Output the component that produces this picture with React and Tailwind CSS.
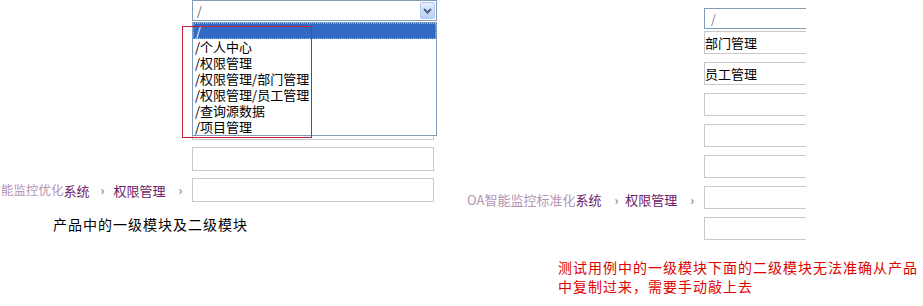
import React from 'react';

const FONT = { fontFamily: '"Noto Sans CJK SC", "Noto Sans", sans-serif' };

const options = ['/', '/个人中心', '/权限管理', '/权限管理/部门管理', '/权限管理/员工管理', '/查询源数据', '/项目管理'];

const Chevron = ({ className }) => (
    <span className={`text-[12px] font-bold leading-none text-[#8a8a8a] ${className}`}>›</span>
);

const LeftBox = () => <div className="h-[24px] w-[242px] border border-[#c9c9c9] bg-white" />;

const RightBox = ({ children }) => (
    <div className="flex h-[23px] w-[102px] items-center border-y border-l border-[#c9c9c9] bg-white text-[13px] leading-none text-black">
        {children}
    </div>
);

const LeftPanel = () => (
    <div className="relative h-full w-[460px] shrink-0">
        <div className="pl-[192px]">
            <div className="flex h-[21px] w-[245px] items-center border border-[#7f9db9] bg-white pl-[4px] pr-[1px]">
                <span className="text-[12px] leading-none text-[#555]">/</span>
                <div className="ml-auto flex h-[17px] w-[15px] items-center justify-center rounded-[2px] border border-[#b3c7ee] bg-gradient-to-b from-[#e6eefd] to-[#b9cdf6]">
                    <svg width="9" height="6" viewBox="0 0 9 6">
                        <path d="M1 1 L4.5 4.5 L8 1" fill="none" stroke="#4d6185" strokeWidth="2" />
                    </svg>
                </div>
            </div>
        </div>

        <div className="mt-[95px] flex flex-col gap-[7px]">
            <div className="pl-[192px]"><LeftBox /></div>
            <div className="pl-[192px]"><LeftBox /></div>
            <div className="flex items-center">
                <div className="flex w-[192px] items-center whitespace-nowrap text-[13px] leading-none text-[#6a1a6a]">
                    <span className="ml-[1px] text-[12.5px] text-[#b592b5]">能监控优化</span>
                    <span>系统</span>
                    <Chevron className="ml-[11px]" />
                    <span className="ml-[9px]">权限管理</span>
                    <Chevron className="ml-[13px]" />
                </div>
                <LeftBox />
            </div>
        </div>

        <p className="mt-[14px] pl-[53px] text-[14px] leading-[16px] tracking-[1px] text-black">产品中的一级模块及二级模块</p>

        <div className="absolute left-[192px] top-[22px] flex h-[114px] w-[245px] flex-col border border-[#7f9db9] bg-white">
            {options.map((o, i) => (
                <div
                    key={o}
                    className={`flex h-[16px] items-center whitespace-nowrap pb-[2px] pl-[2px] text-[13px] leading-[13px] ${i === 0 ? 'border border-dotted border-[#9fb4dc] bg-[#316ac5] text-white' : 'text-black'}`}
                >
                    {o}
                </div>
            ))}
        </div>

        <div className="absolute left-[182px] top-[26px] h-[112px] w-[130px] border border-[#c5213f]" />
    </div>
);

const RightPanel = () => (
    <div className="h-full w-[463px] shrink-0 pt-[8px]">
        <div className="flex flex-col">
            <div className="pl-[244px]">
                <div className="flex h-[21px] w-[102px] items-center border-y border-l border-[#7f9db9] bg-white pl-[6px] text-[12px] leading-none text-[#777]">/</div>
            </div>
            <div className="mt-[2px] pl-[244px]"><RightBox>部门管理</RightBox></div>
            <div className="mt-[8px] pl-[244px]"><RightBox>员工管理</RightBox></div>
            <div className="mt-[8px] pl-[244px]"><RightBox /></div>
            <div className="mt-[8px] pl-[244px]"><RightBox /></div>
            <div className="mt-[8px] pl-[244px]"><RightBox /></div>
            <div className="mt-[8px] flex items-center">
                <div className="flex w-[244px] translate-y-[2px] items-center whitespace-nowrap text-[13px] leading-none text-[#6a1a6a]">
                    <span className="ml-[7px] text-[#b592b5]">OA智能监控标准化</span>
                    <span>系统</span>
                    <Chevron className="ml-[13px]" />
                    <span className="ml-[7px]">权限管理</span>
                    <Chevron className="ml-[13px]" />
                </div>
                <RightBox />
            </div>
            <div className="mt-[8px] pl-[244px]"><RightBox /></div>
        </div>

        <p className="mt-[18px] whitespace-nowrap pl-[98px] text-[14px] leading-[19px] tracking-[1px] text-[#e00000]">
            测试用例中的一级模块下面的二级模块无法准确从产品
            <br />
            中复制过来，需要手动敲上去
        </p>
    </div>
);

export default function App() {
    return (
        <div className="flex h-[306px] w-[923px] overflow-hidden bg-white" style={FONT}>
            <LeftPanel />
            <RightPanel />
        </div>
    );
}
